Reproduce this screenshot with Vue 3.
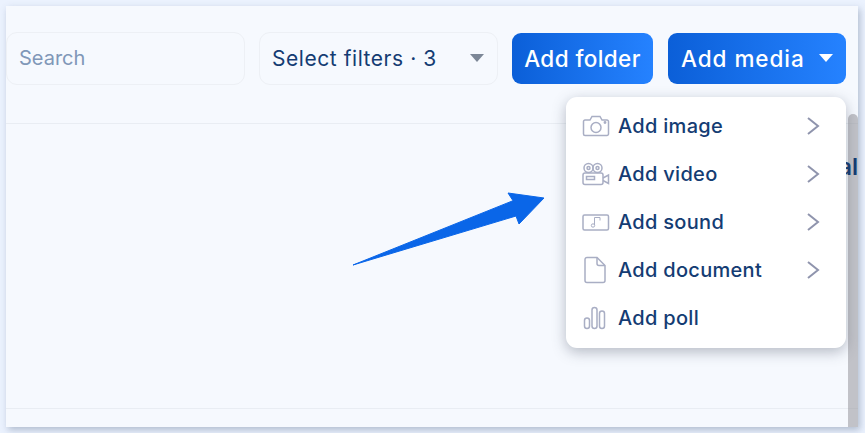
<template>
  <div class="page">
    <div class="panel">
      <div class="toolbar">
        <input class="search" type="text" placeholder="Search" />
        <div class="select">
          <span>Select filters · 3</span>
          <i class="caret grey"></i>
        </div>
        <button class="btn folder">Add folder</button>
        <button class="btn media">
          <span>Add media</span>
          <i class="caret white"></i>
        </button>
      </div>
      <div class="content">
        <div class="bottom-line"></div>

        <svg class="arrow" width="200" height="85" viewBox="0 0 200 85">
          <path
            d="M3 80 L163 15.700 L158 8 L194 13 L169 39 L166 31 Z"
            fill="#0a66e8"
            stroke="#0a66e8"
            stroke-width="1"
            stroke-linejoin="round"
          />
        </svg>

        <div class="scrollbar"></div>
        <span class="behind">al</span>

        <ul class="menu">
          <li v-for="item in items" :key="item.label">
            <span class="icon">
              <svg v-if="item.icon === 'image'" width="28" height="24" viewBox="0 0 28 24">
                <path d="M3 6h5l2-3.500h8l2 3.500h5a1.500 1.500 0 0 1 1.500 1.500v12.500a1.500 1.500 0 0 1-1.500 1.500h-22a1.500 1.500 0 0 1-1.500-1.500v-12.500a1.500 1.500 0 0 1 1.500-1.500z" />
                <circle cx="14" cy="13.500" r="5" />
                <circle cx="23" cy="8.500" r="0.700" />
              </svg>
              <svg v-else-if="item.icon === 'video'" width="28" height="24" viewBox="0 0 28 24">
                <circle cx="6.500" cy="6" r="4.500" />
                <circle cx="6.500" cy="6" r="1.500" />
                <circle cx="15.500" cy="6" r="4.500" />
                <circle cx="15.500" cy="6" r="1.500" />
                <rect x="1" y="11" width="20" height="11.500" rx="2" />
                <rect x="4.500" y="14.500" width="8" height="3" />
                <path d="M21 16l5.500-3v8.500l-5.500-3" />
              </svg>
              <svg v-else-if="item.icon === 'sound'" width="28" height="24" viewBox="0 0 28 24">
                <rect x="1" y="5" width="25.500" height="15" rx="1.500" />
                <path class="thin" d="M12.500 15V7.500h5.500v3" />
                <circle class="thin" cx="11" cy="15.500" r="1.700" />
              </svg>
              <svg v-else-if="item.icon === 'document'" width="28" height="28" viewBox="0 0 28 28">
                <path d="M5 1.500h10l8 8v15a2 2 0 0 1-2 2h-16a2 2 0 0 1-2-2v-21a2 2 0 0 1 2-2z" />
                <path d="M15 1.500v6a2 2 0 0 0 2 2h6" />
              </svg>
              <svg v-else width="28" height="24" viewBox="0 0 28 24">
                <rect x="2.500" y="12" width="5" height="10.500" rx="2.500" />
                <rect x="10" y="1.500" width="5" height="21" rx="2.500" />
                <rect x="17.500" y="5" width="5" height="17.500" rx="2.500" />
              </svg>
            </span>
            <span class="label">{{ item.label }}</span>
            <svg v-if="item.more" class="chev" width="14" height="20" viewBox="0 0 14 20">
              <path d="M2 2l10 8-10 8" />
            </svg>
          </li>
        </ul>
      </div>
    </div>
  </div>
</template>

<script setup>
const items = [
  { label: "Add image", icon: "image", more: true },
  { label: "Add video", icon: "video", more: true },
  { label: "Add sound", icon: "sound", more: true },
  { label: "Add document", icon: "document", more: true },
  { label: "Add poll", icon: "poll", more: false },
];
</script>

<style>
html,
body {
  margin: 0;
  background: #ebf2fe;
  overflow: hidden;
}
</style>

<style scoped>
.page {
  width: 865px;
  height: 433px;
  padding: 6px 7px 6px 6px;
  box-sizing: border-box;
  font-family: "Inter", "Liberation Sans", sans-serif;
}
.panel {
  height: 100%;
  background: #f6f9fe;
  display: flex;
  flex-direction: column;
  box-shadow: 2px 3px 7px rgba(70, 90, 120, 0.35);
}
.toolbar {
  height: 118px;
  flex-shrink: 0;
  display: flex;
  align-items: center;
  gap: 14px;
  padding-bottom: 12px;
  box-sizing: border-box;
  border-bottom: 1px solid #e9edf3;
}
.search,
.select {
  width: 239px;
  height: 53px;
  box-sizing: border-box;
  background: transparent;
  border: 1px solid #edf0f5;
  border-radius: 11px;
  font-family: inherit;
  outline: none;
}
.search {
  padding: 0 12px 2px;
  font-size: 20px;
}
.search::placeholder {
  color: #8097b8;
  opacity: 1;
}
.select {
  display: flex;
  align-items: center;
  justify-content: space-between;
  padding: 0 13px 1px 12px;
  color: #143c73;
  font-size: 21px;
  letter-spacing: 0.55px;
}
.btn {
  height: 51px;
  border: none;
  border-radius: 9px;
  background: linear-gradient(90deg, #0b5fd8, #2582ff);
  color: #fff;
  font-family: inherit;
  font-size: 22.500px;
  font-weight: 500;
  letter-spacing: 0.4px;
  padding: 0 0 1px;
}
.folder {
  width: 141px;
}
.media {
  width: 178px;
  margin-left: 1px;
  display: flex;
  align-items: center;
  justify-content: space-between;
  padding: 0 13px 1px;
  box-sizing: border-box;
  letter-spacing: 0.95px;
}
.caret {
  width: 0;
  height: 0;
  border-left: 7.500px solid transparent;
  border-right: 7.500px solid transparent;
  border-top: 8px solid #7c8797;
}
.caret.white {
  border-top-color: #fff;
}
.content {
  flex: 1;
  position: relative;
}
.behind {
  position: absolute;
  right: 0;
  top: 29px;
  color: #143c73;
  font-size: 23px;
  font-weight: 600;
}
.bottom-line {
  position: absolute;
  left: 0;
  right: 0;
  top: 284px;
  border-top: 1px solid #e9edf3;
}
.arrow {
  position: absolute;
  left: 344px;
  top: 61px;
}
.scrollbar {
  position: absolute;
  left: 842px;
  width: 10px;
  top: -10px;
  bottom: 0;
  background: rgba(150, 150, 155, 0.55);
  border-radius: 5px 5px 0 0;
}
.menu {
  position: absolute;
  left: 560px;
  top: -27px;
  width: 280px;
  height: 251px;
  box-sizing: border-box;
  margin: 0;
  padding: 5px 0 0;
  list-style: none;
  background: #fff;
  border-radius: 11px;
  box-shadow: 0 4px 14px rgba(60, 70, 90, 0.35);
}
.menu li {
  height: 48px;
  display: flex;
  align-items: center;
  padding: 0 26px 0 16px;
  color: #143c73;
  font-size: 20px;
  font-weight: 500;
  letter-spacing: 0.3px;
}
.icon {
  width: 36px;
  display: flex;
  align-items: center;
}
.icon svg {
  fill: none;
  stroke: #a9aec4;
  stroke-width: 1.500;
}
.icon svg .thin {
  stroke-width: 1;
}
.label {
  flex: 1;
}
.chev {
  fill: none;
  stroke: #8f94ad;
  stroke-width: 2;
}
</style>
